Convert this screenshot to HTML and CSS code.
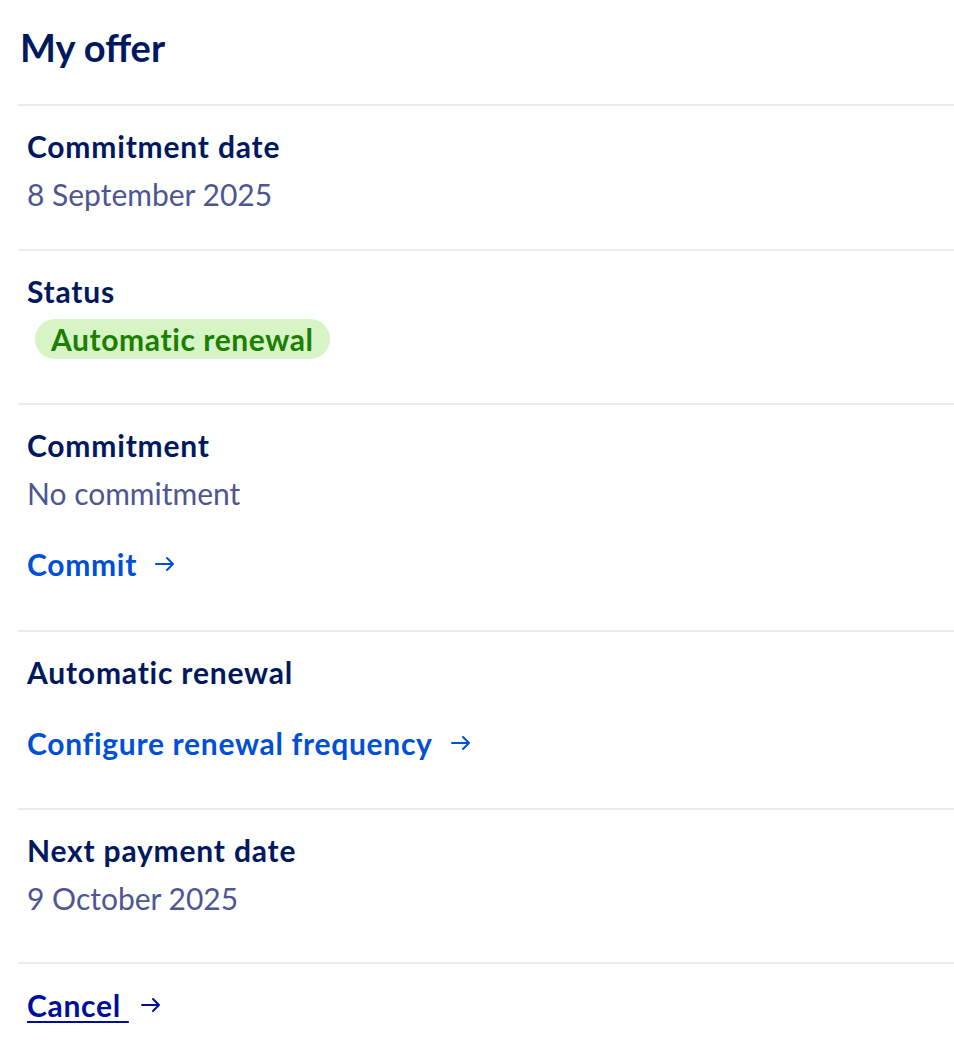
FILE: index.html
```html
<!DOCTYPE html>
<html lang="en">
  <head>
    <meta charset="UTF-8" />
    <title>My offer</title>
    <link rel="stylesheet" href="styles.css">
  </head>
  <body>
    <section class="offer">
      <h1 class="offer-title">My offer</h1>

      <dl class="offer-list">
        <div class="offer-item">
          <dt>Commitment date</dt>
          <dd>8 September 2025</dd>
        </div>

        <div class="offer-item">
          <dt>Status</dt>
          <dd><span class="badge">Automatic renewal</span></dd>
        </div>

        <div class="offer-item offer-item--commit">
          <dt>Commitment</dt>
          <dd>No commitment</dd>
          <dd class="action">
            <a class="link" href="#">Commit
              <svg class="arrow" viewBox="0 0 20 16" width="20" height="16" aria-hidden="true"><path d="M1 8h17M12 2l6 6-6 6" /></svg>
            </a>
          </dd>
        </div>

        <div class="offer-item offer-item--renewal">
          <dt>Automatic renewal</dt>
          <dd class="action">
            <a class="link" href="#">Configure renewal frequency
              <svg class="arrow" viewBox="0 0 20 16" width="20" height="16" aria-hidden="true"><path d="M1 8h17M12 2l6 6-6 6" /></svg>
            </a>
          </dd>
        </div>

        <div class="offer-item offer-item--last">
          <dt>Next payment date</dt>
          <dd>9 October 2025</dd>
        </div>

        <div class="offer-item offer-item--cancel">
          <a class="link link--cancel" href="#"><u>Cancel&nbsp;</u>
            <svg class="arrow" viewBox="0 0 20 16" width="20" height="16" aria-hidden="true"><path d="M1 8h17M12 2l6 6-6 6" /></svg>
          </a>
        </div>
      </dl>
    </section>
  </body>
</html>
```

FILE: styles.css
```css
body {
  font-family: Lato, "Open Sans", sans-serif;
  margin: 0;
  padding: 0;
  background: #fff;
  color: #00185e;
}
.offer {
  margin-left: 18px;
}
.offer-title {
  margin: 0;
  padding: 22px 0 0 2px;
  height: 104px;
  box-sizing: border-box;
  font-size: 38px;
  line-height: 50px;
  font-weight: 700;
  color: #00185e;
}
.offer-list {
  margin: 0;
}
.offer-item {
  border-top: 2px solid #ececec;
  padding: 22px 9px 37px;
}
.offer-item dt {
  font-size: 30px;
  line-height: 36px;
  font-weight: 700;
  letter-spacing: 0.8px;
  color: #00185e;
}
.offer-item dd {
  margin: 12px 0 0;
  font-size: 30px;
  line-height: 36px;
  color: #4d5693;
}
.badge {
  display: inline-block;
  margin: -3px 0 7px 8px;
  padding: 0 16px;
  height: 40px;
  line-height: 40px;
  border-radius: 20px;
  background: #d6f4c6;
  color: #1b7f00;
  font-weight: 700;
  letter-spacing: 0.6px;
}
.offer-item--commit {
  padding-bottom: 48px;
}
.offer-item--renewal {
  padding-bottom: 47px;
}
.offer-item dd.action {
  margin-top: 35px;
}
.offer-item--last {
  padding-bottom: 46px;
}
.offer-item--cancel {
  padding: 23px 9px 0;
}
.link {
  display: inline-flex;
  align-items: center;
  gap: 18px;
  color: #0050d7;
  font-weight: 700;
  font-size: 30px;
  line-height: 36px;
  letter-spacing: 0.7px;
  text-decoration: none;
}
.link--cancel {
  gap: 12px;
  color: #000e9c;
}
.link--cancel u {
  text-decoration-thickness: 2px;
  text-underline-offset: 4px;
}
.arrow {
  fill: none;
  stroke: currentColor;
  stroke-width: 2;
  stroke-linecap: round;
  stroke-linejoin: round;
}
```
